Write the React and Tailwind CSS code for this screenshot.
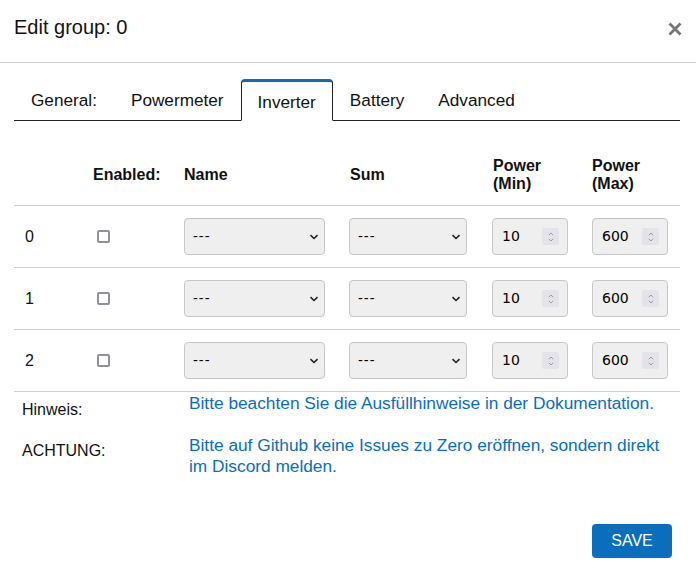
import React from "react";

function Chevron() {
  return (
    <svg width="10" height="6" viewBox="0 0 10 6">
      <path d="M1.5 1.2 5 4.5 8.5 1.2" fill="none" stroke="#222" strokeWidth="1.6" />
    </svg>
  );
}

function Select({ w }) {
  return (
    <div
      className={`flex h-[37px] ${w} items-center justify-between rounded-[4px] border border-[#c6c6c6] bg-[#efefef] pl-[8px] pr-[5px] font-['DejaVu_Sans',sans-serif] text-[13.5px] text-black`}
    >
      <span className="tracking-[1px]">---</span>
      <Chevron />
    </div>
  );
}

function NumberInput({ value }) {
  return (
    <div className="flex h-[37px] w-[76px] items-center justify-between rounded-[4px] border border-[#c6c6c6] bg-[#efefef] pl-[9px] pr-[8px] font-['DejaVu_Sans',sans-serif] text-[14px] text-black">
      <span>{value}</span>
      <div className="flex h-[17px] w-[17px] flex-col items-center justify-center gap-[2px] rounded-[2px] bg-[#e3e3e9]">
        <svg width="6" height="4" viewBox="0 0 6 4">
          <path d="M0.8 3.3 3 1 5.2 3.3" fill="none" stroke="#9a9aa6" strokeWidth="1" />
        </svg>
        <svg width="6" height="4" viewBox="0 0 6 4">
          <path d="M0.8 0.7 3 3 5.2 0.7" fill="none" stroke="#9a9aa6" strokeWidth="1" />
        </svg>
      </div>
    </div>
  );
}

function Checkbox() {
  return <div className="ml-[4px] h-[13px] w-[13px] rounded-[2px] border-2 border-[#8f8f9d] bg-white" />;
}

function Row({ n }) {
  return (
    <div className="grid h-[62px] grid-cols-[68px_91px_165px_143px_100px_99px] items-center border-b border-[#cfcfcf]">
      <div className="pl-[11px] text-[16px]">{n}</div>
      <div className="pl-[11px]">
        <Checkbox />
      </div>
      <div className="pl-[11px]">
        <Select w="w-[141px]" />
      </div>
      <div className="pl-[11px]">
        <Select w="w-[118px]" />
      </div>
      <div className="pl-[11px]">
        <NumberInput value="10" />
      </div>
      <div className="pl-[11px]">
        <NumberInput value="600" />
      </div>
    </div>
  );
}

export default function App() {
  const tabs = ["General:", "Powermeter", "Inverter", "Battery", "Advanced"];
  return (
    <div className="h-[584px] w-[696px] overflow-hidden bg-white font-['Liberation_Sans',Arial,sans-serif] text-[#111]">
      {/* Header */}
      <div className="flex h-[63px] items-start justify-between border-b border-[#d2d2d2] pl-[14px] pr-[14px] pt-[12px]">
        <div className="text-[20px] leading-[30px] text-[#111]">Edit group: 0</div>
        <svg className="mt-[10px]" width="14" height="14" viewBox="0 0 14 14">
          <path d="M1.5 1.5 12.5 12.5M12.5 1.5 1.5 12.5" stroke="#777" strokeWidth="2.8" />
        </svg>
      </div>

      {/* Tabs */}
      <div className="ml-[14px] mr-[16px] mt-[16px] flex items-end border-b border-[#222]">
        {tabs.map((t) => {
          const active = t === "Inverter";
          return (
            <div
              key={t}
              className={
                active
                  ? "-mb-px rounded-t-[4px] border border-t-[3px] border-[#222] border-t-[#0a6ebd] border-b-white bg-white px-[16px] pb-[6px] pt-[8px] text-[17.2px] leading-[24px] text-[#111]"
                  : "-mb-px border border-transparent px-[16px] pb-[8px] pt-[6px] text-[17.2px] leading-[24px] text-[#111]"
              }
            >
              {t}
            </div>
          );
        })}
      </div>

      {/* Table */}
      <div className="ml-[14px] mr-[16px] mt-[24px]">
        <div className="grid h-[61px] grid-cols-[68px_91px_165px_143px_100px_99px] items-center border-b border-[#cfcfcf] text-[16px] font-bold leading-[18px] text-[#111]">
          <div />
          <div className="pl-[11px]">Enabled:</div>
          <div className="pl-[11px]">Name</div>
          <div className="pl-[12px]">Sum</div>
          <div className="pl-[12px]">
            Power
            <br />
            (Min)
          </div>
          <div className="pl-[11px]">
            Power
            <br />
            (Max)
          </div>
        </div>
        <Row n="0" />
        <Row n="1" />
        <Row n="2" />
      </div>

      {/* Info */}
      <div className="ml-[14px] mr-[16px] mt-[1px] grid grid-cols-[175px_1fr] gap-y-[15px] leading-[21px]">
        <div className="pl-[8px] pt-[6px] text-[16px] text-[#111]">Hinweis:</div>
        <div className="text-[17.3px] text-[#0a6ebd]">Bitte beachten Sie die Ausfüllhinweise in der Dokumentation.</div>
        <div className="pl-[8px] pt-[5px] text-[16px] text-[#111]">ACHTUNG:</div>
        <div className="text-[17.3px] text-[#0a6ebd]">
          Bitte auf Github keine Issues zu Zero eröffnen, sondern direkt im Discord melden.
        </div>
      </div>

      {/* Footer */}
      <div className="mr-[24px] mt-[47px] flex justify-end">
        <div className="flex h-[34px] w-[80px] items-center justify-center rounded-[4px] bg-[#0a6ebd] text-[16px] text-white">
          SAVE
        </div>
      </div>
    </div>
  );
}
